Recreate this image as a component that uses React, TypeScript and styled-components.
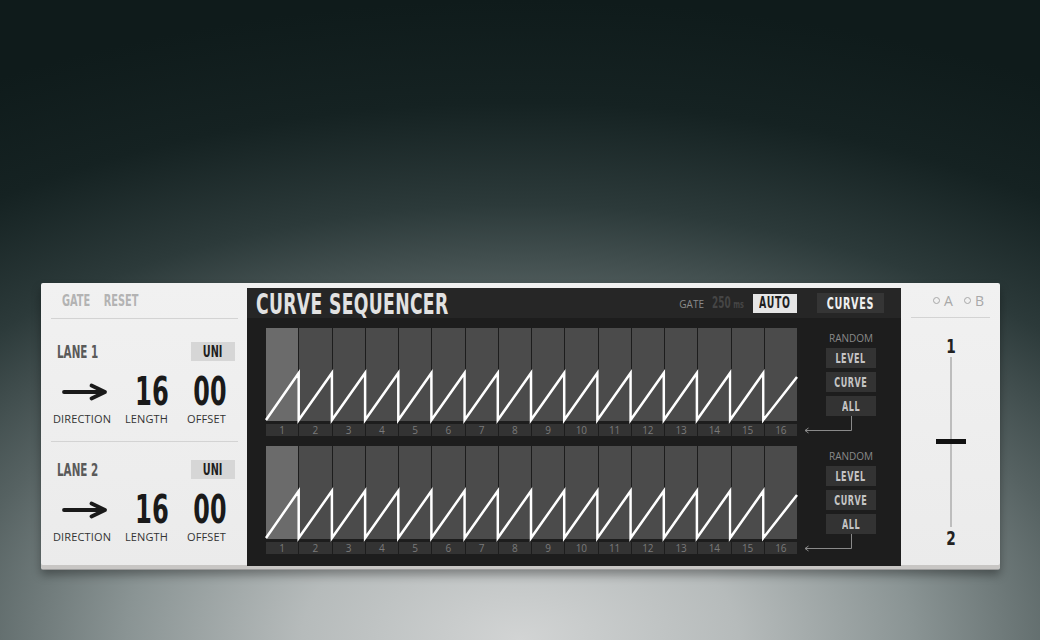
import React from "react";
import styled, { createGlobalStyle } from "styled-components";

const COND = `"DejaVu Sans Condensed", "DejaVu Sans", sans-serif`;
const SANS = `"Open Sans", "Noto Sans", "DejaVu Sans", sans-serif`;

const Global = createGlobalStyle`
  html, body { margin: 0; padding: 0; }
  body {
    width: 1040px;
    height: 640px;
    overflow: hidden;
    background: radial-gradient(ellipse 105% 100% at 50% 100%, #d2d4d4 0%, #b6bbbb 20%, #8a9494 36%, #566262 52%, #2c3a3a 68%, #152222 84%, #0f1b1b 100%);
    background-color: #0f1b1b;
    font-family: ${SANS};
  }
`;

const Squeeze = styled.span<{ $sx: number; $origin?: string }>`
  display: inline-block;
  white-space: nowrap;
  transform: scaleX(${(p) => p.$sx});
  transform-origin: ${(p) => p.$origin ?? "center"};
`;

const Page = styled.div`
  box-sizing: border-box;
  width: 1040px;
  height: 640px;
  padding: 283px 40px 0 41px;
`;

const Panel = styled.div`
  display: flex;
  width: 959px;
  height: 286px;
  background: linear-gradient(180deg, #f1f1f1 0%, #ebebeb 100%);
  border-radius: 2px;
  box-shadow: inset 0 -4px 0 #c8c6c4, 0 1px 0 #9c9c9c, 0 6px 10px rgba(0, 0, 0, 0.35);
`;

const LeftSide = styled.div`
  width: 206px;
  display: flex;
  flex-direction: column;
`;

const LeftHeader = styled.div`
  height: 35px;
  margin: 0 9px 0 10px;
  border-bottom: 1px solid #d3d3d3;
  display: flex;
  align-items: center;
  padding-left: 11px;
  font-family: ${COND};
  font-weight: 700;
  font-size: 16px;
  color: #b3b3b3;
  span span { margin-left: 20px; }
`;

const LaneBlock = styled.div<{ $last?: boolean }>`
  height: ${(p) => (p.$last ? 124 : 123)}px;
  margin: 0 9px 0 10px;
  border-bottom: ${(p) => (p.$last ? "none" : "1px solid #d3d3d3")};
  box-sizing: border-box;
  padding-top: ${(p) => (p.$last ? 18 : 23)}px;
`;

const LaneTop = styled.div`
  display: flex;
  justify-content: space-between;
  align-items: center;
  height: 19px;
  padding: 0 3px 0 6px;
`;

const LaneName = styled.span`
  font-family: ${COND};
  font-weight: 700;
  font-size: 18px;
  color: #5a5a5a;
`;

const UniButton = styled.div`
  width: 44px;
  height: 19px;
  background: #d6d6d6;
  display: flex;
  align-items: center;
  justify-content: center;
  font-family: ${COND};
  font-weight: 700;
  font-size: 15px;
  color: #1e1e1e;
`;

const Values = styled.div`
  display: flex;
  margin-top: 16px;
`;

const ValueCol = styled.div<{ $w: number; $ml: number; $shift: number }>`
  width: ${(p) => p.$w}px;
  margin-left: ${(p) => p.$ml}px;
  display: flex;
  flex-direction: column;
  align-items: center;
  & > :first-child { transform: translateX(${(p) => p.$shift}px); }
`;

const BigValue = styled.div`
  height: 30px;
  display: flex;
  align-items: center;
  justify-content: center;
  font-family: ${COND};
  font-weight: 700;
  font-size: 39px;
  line-height: 30px;
  color: #1a1a1a;
`;

const ValueLabel = styled.div`
  margin-top: 6px;
  font-family: ${SANS};
  font-size: 11px;
  line-height: 12px;
  color: #333;
  letter-spacing: 0.15px;
  white-space: nowrap;
`;

const Dark = styled.div`
  width: 654px;
  height: 278px;
  margin-top: 5px;
  background: #1d1d1d;
  display: flex;
  flex-direction: column;
`;

const DarkHeader = styled.div`
  height: 30px;
  background: #262626;
  display: flex;
  align-items: center;
  padding: 0 17px 0 9px;
`;

const Title = styled.div`
  font-family: ${COND};
  font-weight: 700;
  font-size: 29px;
  color: #e2e2e2;
  letter-spacing: 0.5px;
  flex: 1;
  margin-top: 1px;
`;

const GateLabel = styled.span`
  font-family: ${SANS};
  font-size: 10px;
  color: #8a8a8a;
  margin-right: 8px;
  margin-top: 2px;
`;

const GateValue = styled.div`
  width: 33px;
  margin-right: 8px;
  font-family: ${COND};
  font-weight: 700;
  font-size: 15px;
  color: #454545;
  small { font-size: 11px; margin-left: 4px; }
`;

const HeadButton = styled.div<{ $light?: boolean }>`
  width: ${(p) => (p.$light ? 44 : 67)}px;
  height: ${(p) => (p.$light ? 19 : 20)}px;
  margin-left: ${(p) => (p.$light ? 0 : 20)}px;
  background: ${(p) => (p.$light ? "#e6e6e6" : "#353535")};
  color: ${(p) => (p.$light ? "#1e1e1e" : "#f0f0f0")};
  display: flex;
  align-items: center;
  justify-content: center;
  font-family: ${COND};
  font-weight: 700;
  font-size: ${(p) => (p.$light ? 15 : 16)}px;
  letter-spacing: 1px;
`;

const DarkBody = styled.div`
  padding: 10px 0 0 19px;
  display: flex;
  flex-direction: column;
  gap: 10px;
`;

const LaneRow = styled.div`
  display: flex;
`;

const LaneGrid = styled.div`
  width: 531px;
  display: flex;
  flex-direction: column;
  gap: 3px;
`;

const Steps = styled.div`
  position: relative;
  height: 93px;
  display: grid;
  grid-template-columns: repeat(16, 1fr);
  column-gap: 1px;
`;

const Step = styled.div<{ $active?: boolean }>`
  background: ${(p) => (p.$active ? "#6b6b6b" : "#4b4b4b")};
`;

const Wave = styled.svg`
  position: absolute;
  left: 0;
  top: 0;
  width: 531px;
  height: 93px;
  overflow: visible;
`;

const Numbers = styled.div`
  height: 12px;
  display: grid;
  grid-template-columns: repeat(16, 1fr);
  column-gap: 1px;
`;

const Num = styled.div`
  background: #333;
  color: #7a7a7a;
  font-family: ${SANS};
  font-size: 10px;
  line-height: 12px;
  text-align: center;
`;

const SideCol = styled.div`
  width: 100px;
  margin-left: 4px;
  display: flex;
  flex-direction: column;
  align-items: center;
  padding-top: 4px;
`;

const RandomLabel = styled.div`
  font-family: ${SANS};
  font-size: 10px;
  line-height: 12px;
  color: #8a8a8a;
  margin-bottom: 4px;
`;

const RandButton = styled.div`
  width: 50px;
  height: 20px;
  margin-bottom: 4px;
  background: #333;
  color: #c4c4c4;
  display: flex;
  align-items: center;
  justify-content: center;
  font-family: ${COND};
  font-weight: 700;
  font-size: 14px;
  letter-spacing: 0.8px;
`;

const ReturnArrow = styled.svg`
  align-self: flex-start;
  margin-left: 3px;
  margin-top: -4px;
`;

const RightSide = styled.div`
  width: 99px;
  display: flex;
  flex-direction: column;
`;

const ABRow = styled.div`
  height: 34px;
  margin: 0 10px;
  border-bottom: 1px solid #d3d3d3;
  display: flex;
  align-items: center;
  justify-content: flex-end;
  padding-right: 6px;
  gap: 11px;
  font-family: ${SANS};
  font-size: 14px;
  color: #a8a8a8;
`;

const ABItem = styled.span`
  display: flex;
  align-items: center;
  gap: 4px;
  &::before {
    content: "";
    width: 5px;
    height: 5px;
    border: 1px solid #a8a8a8;
    border-radius: 50%;
  }
`;

const SliderCol = styled.div`
  display: flex;
  flex-direction: column;
  align-items: center;
  padding-top: 21px;
  padding-left: 1px;
`;

const SliderNum = styled.div`
  font-family: ${COND};
  font-weight: 700;
  font-size: 19px;
  line-height: 14px;
  color: #222;
`;

const Track = styled.div`
  position: relative;
  width: 2px;
  height: 170px;
  margin: 4px 0;
  background: #bdbdbd;
`;

const Handle = styled.div`
  position: absolute;
  left: -14px;
  top: 82px;
  width: 30px;
  height: 5px;
  background: #111;
`;

const pitch = 531 / 16;

function wavePath() {
  let d = `M0,92`;
  for (let i = 0; i < 16; i++) {
    const x1 = (i + 1) * pitch - (i < 15 ? 0.5 : 0);
    if (i < 15) d += ` L${x1.toFixed(1)},45 L${x1.toFixed(1)},92`;
    else d += ` L531,49`;
  }
  return d;
}

const steps = Array.from({ length: 16 }, (_, i) => i + 1);

function Lane() {
  return (
    <LaneRow>
      <LaneGrid>
        <Steps>
          {steps.map((s) => (
            <Step key={s} $active={s === 1} />
          ))}
          <Wave viewBox="0 0 531 93">
            <path d={wavePath()} fill="none" stroke="#fff" strokeWidth={2.5} strokeLinejoin="miter" />
          </Wave>
        </Steps>
        <Numbers>
          {steps.map((s) => (
            <Num key={s}>{s}</Num>
          ))}
        </Numbers>
      </LaneGrid>
      <SideCol>
        <RandomLabel>RANDOM</RandomLabel>
        <RandButton><Squeeze $sx={0.64}>LEVEL</Squeeze></RandButton>
        <RandButton><Squeeze $sx={0.64}>CURVE</Squeeze></RandButton>
        <RandButton><Squeeze $sx={0.64}>ALL</Squeeze></RandButton>
        <ReturnArrow width="50" height="18" viewBox="0 0 50 18">
          <path d="M47.5,0 V14.5 H1" fill="none" stroke="#8a8a8a" strokeWidth="1" />
          <path d="M4.5,12 L1,14.5 L4.5,17" fill="none" stroke="#8a8a8a" strokeWidth="1" />
        </ReturnArrow>
      </SideCol>
    </LaneRow>
  );
}

function LaneControls({ n, last }: { n: number; last?: boolean }) {
  return (
    <LaneBlock $last={last}>
      <LaneTop>
        <LaneName><Squeeze $sx={0.64} $origin="left">LANE {n}</Squeeze></LaneName>
        <UniButton><Squeeze $sx={0.72}>UNI</Squeeze></UniButton>
      </LaneTop>
      <Values>
        <ValueCol $w={62} $ml={0} $shift={3}>
          <BigValue>
            <svg width="46" height="20" viewBox="0 0 46 20">
              <path d="M2,10 H43 M29.5,3.5 L43,10 L29.5,16.5" fill="none" stroke="#1a1a1a" strokeWidth="3.8" strokeLinecap="round" strokeLinejoin="round" />
            </svg>
          </BigValue>
          <ValueLabel>DIRECTION</ValueLabel>
        </ValueCol>
        <ValueCol $w={46} $ml={10.5} $shift={5.5}>
          <BigValue><Squeeze $sx={0.69}>16</Squeeze></BigValue>
          <ValueLabel>LENGTH</ValueLabel>
        </ValueCol>
        <ValueCol $w={44} $ml={15} $shift={3.5}>
          <BigValue><Squeeze $sx={0.68}>00</Squeeze></BigValue>
          <ValueLabel>OFFSET</ValueLabel>
        </ValueCol>
      </Values>
    </LaneBlock>
  );
}

export default function App() {
  return (
    <>
      <Global />
      <Page>
        <Panel>
          <LeftSide>
            <LeftHeader>
              <Squeeze $sx={0.68} $origin="left">
                GATE<span>RESET</span>
              </Squeeze>
            </LeftHeader>
            <LaneControls n={1} />
            <LaneControls n={2} last />
          </LeftSide>
          <Dark>
            <DarkHeader>
              <Title><Squeeze $sx={0.66} $origin="left">CURVE SEQUENCER</Squeeze></Title>
              <GateLabel>GATE</GateLabel>
              <GateValue>
                <Squeeze $sx={0.66} $origin="left">250<small>ms</small></Squeeze>
              </GateValue>
              <HeadButton $light><Squeeze $sx={0.69}>AUTO</Squeeze></HeadButton>
              <HeadButton><Squeeze $sx={0.67}>CURVES</Squeeze></HeadButton>
            </DarkHeader>
            <DarkBody>
              <Lane />
              <Lane />
            </DarkBody>
          </Dark>
          <RightSide>
            <ABRow>
              <ABItem>A</ABItem>
              <ABItem>B</ABItem>
            </ABRow>
            <SliderCol>
              <SliderNum><Squeeze $sx={0.8}>1</Squeeze></SliderNum>
              <Track>
                <Handle />
              </Track>
              <SliderNum><Squeeze $sx={0.8}>2</Squeeze></SliderNum>
            </SliderCol>
          </RightSide>
        </Panel>
      </Page>
    </>
  );
}
